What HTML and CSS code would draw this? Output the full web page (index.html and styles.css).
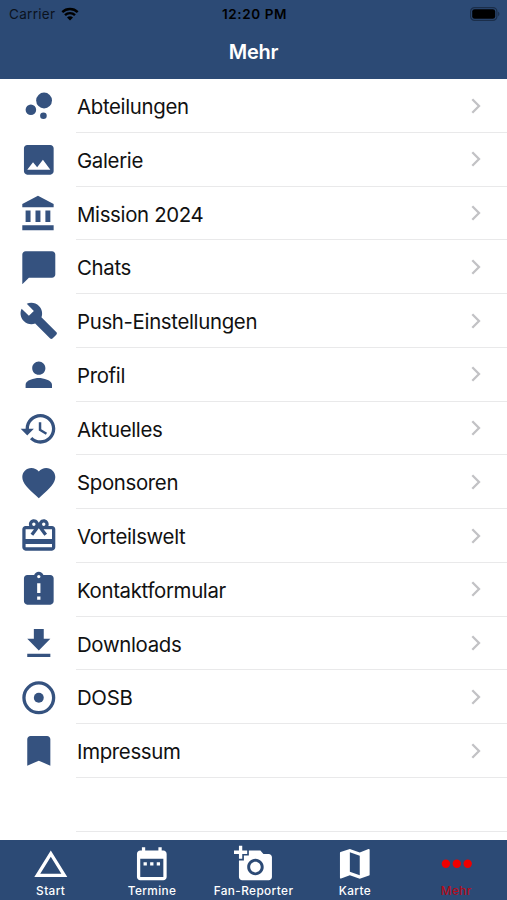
FILE: index.html
```html
<!DOCTYPE html>
<html lang="de">
<head>
  <meta charset="UTF-8" />
  <meta name="viewport" content="width=device-width, initial-scale=1.0" />
  <title>Mehr</title>
  <link rel="stylesheet" href="styles.css">
</head>
<body>
  <svg class="sprite" width="0" height="0">
    <symbol id="chevron" viewBox="0 0 12 18"><path d="M2.300 2.200l6.700 6.800-6.700 6.800" fill="none" stroke="#c2c2c5" stroke-width="2.300"/></symbol>
  </svg>

  <header class="header">
    <div class="status">
      <div class="carrier">
        <span>Carrier</span>
        <svg class="wifi" viewBox="0 0 18 14">
          <path d="M1.300 5.100a11 11 0 0 1 15.400 0M4 8.200a7.100 7.100 0 0 1 10 0" fill="none" stroke="#000" stroke-width="2.400"/>
          <path d="M9 13.600l-3-3.100a4.200 4.200 0 0 1 6 0z"/>
        </svg>
      </div>
      <span class="time">12:20 PM</span>
      <svg class="battery" viewBox="0 0 30 14">
        <rect x=".6" y=".6" width="26.300" height="12.800" rx="4" fill="none" stroke="#1b2e4a" stroke-width="1.200"/>
        <rect x="2.200" y="2.200" width="23" height="9.600" rx="2.400"/>
        <path d="M28.100 4.800c1.700.6 1.700 3.800 0 4.400z" fill="#1b2e4a"/>
      </svg>
    </div>
    <h1>Mehr</h1>
  </header>

  <ul class="menu">
    <li>
      <svg class="icon" viewBox="0 0 24 24"><circle cx="7.2" cy="14.4" r="3.2"/><circle cx="14.8" cy="18" r="2"/><circle cx="15.2" cy="8.8" r="4.8"/></svg>
      <a class="row"><span>Abteilungen</span><svg class="chevron"><use href="#chevron"/></svg></a>
    </li>
    <li>
      <svg class="icon" viewBox="0 0 24 24"><path d="M21 19V5c0-1.100-.9-2-2-2H5c-1.100 0-2 .9-2 2v14c0 1.100.9 2 2 2h14c1.100 0 2-.9 2-2zM8.500 13.500l2.500 3.010L14.500 12l4.500 6H5l3.500-4.500z"/></svg>
      <a class="row"><span>Galerie</span><svg class="chevron"><use href="#chevron"/></svg></a>
    </li>
    <li>
      <svg class="icon" viewBox="0 0 24 24"><path d="M4 10v7h3v-7H4zm6 0v7h3v-7h-3zM2 22h19v-3H2v3zm14-12v7h3v-7h-3zm-4.500-9L2 6v2h19V6l-9.500-5z"/></svg>
      <a class="row"><span>Mission 2024</span><svg class="chevron"><use href="#chevron"/></svg></a>
    </li>
    <li>
      <svg class="icon" viewBox="0 0 24 24"><path d="M20 2H4c-1.100 0-1.990.9-1.990 2L2 22l4-4h14c1.100 0 2-.9 2-2V4c0-1.100-.9-2-2-2z"/></svg>
      <a class="row"><span>Chats</span><svg class="chevron"><use href="#chevron"/></svg></a>
    </li>
    <li>
      <svg class="icon" viewBox="0 0 24 24"><path d="M22.700 19l-9.100-9.100c.9-2.300.4-5-1.500-6.900-2-2-5-2.400-7.400-1.300L9 6 6 9 1.600 4.700C.4 7.100.9 10.100 2.900 12.100c1.900 1.900 4.600 2.400 6.900 1.500l9.100 9.100c.4.4 1 .4 1.400 0l2.300-2.300c.5-.4.5-1.100.1-1.400z"/></svg>
      <a class="row"><span>Push-Einstellungen</span><svg class="chevron"><use href="#chevron"/></svg></a>
    </li>
    <li>
      <svg class="icon" viewBox="0 0 24 24"><path d="M12 12c2.210 0 4-1.790 4-4s-1.790-4-4-4-4 1.790-4 4 1.790 4 4 4zm0 2c-2.670 0-8 1.340-8 4v2h16v-2c0-2.660-5.330-4-8-4z"/></svg>
      <a class="row"><span>Profil</span><svg class="chevron"><use href="#chevron"/></svg></a>
    </li>
    <li>
      <svg class="icon" viewBox="0 0 24 24"><path d="M13 3c-4.970 0-9 4.030-9 9H1l3.890 3.890.07.14L9 12H6c0-3.870 3.130-7 7-7s7 3.130 7 7-3.130 7-7 7c-1.930 0-3.680-.79-4.940-2.060l-1.420 1.420C8.270 19.990 10.510 21 13 21c4.970 0 9-4.030 9-9s-4.030-9-9-9zm-1 5v5l4.280 2.540.72-1.210-3.500-2.080V8H12z"/></svg>
      <a class="row"><span>Aktuelles</span><svg class="chevron"><use href="#chevron"/></svg></a>
    </li>
    <li>
      <svg class="icon" viewBox="0 0 24 24"><path d="M12 21.350l-1.450-1.320C5.400 15.360 2 12.280 2 8.500 2 5.420 4.420 3 7.500 3c1.740 0 3.410.81 4.500 2.090C13.090 3.810 14.760 3 16.500 3 19.580 3 22 5.420 22 8.500c0 3.780-3.400 6.860-8.550 11.540L12 21.350z"/></svg>
      <a class="row"><span>Sponsoren</span><svg class="chevron"><use href="#chevron"/></svg></a>
    </li>
    <li>
      <svg class="icon" viewBox="0 0 24 24"><path d="M20 6h-2.180c.11-.31.18-.65.18-1 0-1.660-1.340-3-3-3-1.050 0-1.960.54-2.500 1.350l-.5.67-.5-.68C10.960 2.540 10.050 2 9 2 7.340 2 6 3.340 6 5c0 .35.07.69.18 1H4c-1.110 0-1.990.89-1.990 2L2 19c0 1.110.89 2 2 2h16c1.110 0 2-.89 2-2V8c0-1.110-.89-2-2-2zm-5-2c.55 0 1 .45 1 1s-.45 1-1 1-1-.45-1-1 .45-1 1-1zM9 4c.55 0 1 .45 1 1s-.45 1-1 1-1-.45-1-1 .45-1 1-1zm11 15H4v-2h16v2zm0-5H4V8h5.080L7 10.830 8.620 12 11 8.760l1-1.360 1 1.360L15.380 12 17 10.830 14.920 8H20v6z"/></svg>
      <a class="row"><span>Vorteilswelt</span><svg class="chevron"><use href="#chevron"/></svg></a>
    </li>
    <li>
      <svg class="icon" viewBox="0 0 24 24"><path d="M19 3h-4.180C14.400 1.840 13.300 1 12 1c-1.300 0-2.400.84-2.820 2H5c-1.100 0-2 .9-2 2v14c0 1.100.9 2 2 2h14c1.100 0 2-.9 2-2V5c0-1.100-.9-2-2-2zm-6 15h-2v-2h2v2zm0-4h-2V8h2v6zm-1-9c-.55 0-1-.45-1-1s.45-1 1-1 1 .45 1 1-.45 1-1 1z"/></svg>
      <a class="row"><span>Kontaktformular</span><svg class="chevron"><use href="#chevron"/></svg></a>
    </li>
    <li>
      <svg class="icon" viewBox="0 0 24 24"><path d="M19 9h-4V3H9v6H5l7 7 7-7zM5 18v2h14v-2H5z"/></svg>
      <a class="row"><span>Downloads</span><svg class="chevron"><use href="#chevron"/></svg></a>
    </li>
    <li>
      <svg class="icon" viewBox="0 0 24 24"><circle cx="12" cy="12" r="9" fill="none" stroke="currentColor" stroke-width="2"/><circle cx="12" cy="12" r="3"/></svg>
      <a class="row"><span>DOSB</span><svg class="chevron"><use href="#chevron"/></svg></a>
    </li>
    <li>
      <svg class="icon" viewBox="0 0 24 24"><path d="M17 3H7c-1.100 0-1.990.9-1.990 2L5 21l7-3 7 3V5c0-1.100-.9-2-2-2z"/></svg>
      <a class="row"><span>Impressum</span><svg class="chevron"><use href="#chevron"/></svg></a>
    </li>
    <li class="empty"><div class="row"></div></li>
  </ul>

  <nav class="tabs">
    <a class="tab">
      <svg class="icon" viewBox="0 0 24 24"><path d="M12 7.770L18.390 18H5.610L12 7.770M12 4L2 20h20L12 4z"/></svg>
      <span>Start</span>
    </a>
    <a class="tab">
      <svg class="icon" viewBox="0 0 24 24"><path d="M9 11H7v2h2v-2zm4 0h-2v2h2v-2zm4 0h-2v2h2v-2zm2-7h-1V2h-2v2H8V2H6v2H5c-1.110 0-1.990.9-1.990 2L3 20c0 1.100.89 2 2 2h14c1.100 0 2-.9 2-2V6c0-1.100-.9-2-2-2zm0 16H5V9h14v11z"/></svg>
      <span>Termine</span>
    </a>
    <a class="tab">
      <svg class="icon" viewBox="0 0 24 24"><path d="M3 4V1h2v3h3v2H5v3H3V6H0V4h3zm3 6V7h3V4h7l1.830 2H21c1.100 0 2 .9 2 2v12c0 1.100-.9 2-2 2H5c-1.100 0-2-.9-2-2V10h3zm7 9c2.760 0 5-2.240 5-5s-2.240-5-5-5-5 2.240-5 5 2.240 5 5 5zm-3.200-5c0 1.770 1.430 3.200 3.200 3.200s3.200-1.430 3.200-3.200-1.430-3.200-3.200-3.200-3.200 1.430-3.200 3.200z"/></svg>
      <span>Fan-Reporter</span>
    </a>
    <a class="tab">
      <svg class="icon" viewBox="0 0 24 24"><path d="M20.500 3l-.16.03L15 5.100 9 3 3.360 4.900c-.21.07-.36.25-.36.48V20.500c0 .28.22.5.5.5l.16-.03L9 18.900l6 2.100 5.640-1.900c.21-.07.36-.25.36-.48V3.500c0-.28-.22-.5-.5-.5zM15 19l-6-2.110V5l6 2.110V19z"/></svg>
      <span>Karte</span>
    </a>
    <a class="tab active">
      <svg class="icon" viewBox="0 0 24 24"><circle cx="5.400" cy="12" r="2.550"/><circle cx="12" cy="12" r="2.550"/><circle cx="18.600" cy="12" r="2.550"/></svg>
      <span>Mehr</span>
    </a>
  </nav>
</body>
</html>
```

FILE: styles.css
```css
:root {
  --primary: #2c4a75;
  --icon: #35527f;
  --line: #e9e9ea;
  --active: #f00000;
}

* {
  box-sizing: border-box;
}

body {
  margin: 0;
  height: 900px;
  display: flex;
  flex-direction: column;
  overflow: hidden;
  background: #fff;
  color: #111;
  font-family: Inter, "Liberation Sans", sans-serif;
}

.sprite {
  display: none;
}

.header {
  flex: none;
  height: 79.2px;
  background: var(--primary);
}

.status {
  height: 27px;
  padding: 0 7px 0 9px;
  display: grid;
  grid-template-columns: 1fr auto 1fr;
  align-items: center;
  color: #000;
  font-size: 13.5px;
}

.carrier {
  display: flex;
  align-items: center;
  gap: 6px;
  color: #0b121d;
  letter-spacing: 0.3px;
}

.wifi {
  width: 18px;
  height: 14px;
}

.time {
  font-weight: 600;
  letter-spacing: 0.6px;
}

.battery {
  width: 30px;
  height: 14px;
  justify-self: end;
}

h1 {
  margin: 0;
  height: 51px;
  line-height: 51px;
  text-align: center;
  color: #fff;
  font-size: 20px;
  font-weight: 600;
  letter-spacing: -0.2px;
}

.menu {
  flex: 1;
  min-height: 0;
  margin: 0;
  padding: 0;
  overflow: hidden;
  list-style: none;
}

.menu li {
  height: 53.75px;
  padding-left: 19px;
  display: flex;
  align-items: center;
}

.menu .empty {
  padding-left: 76px;
}

.icon {
  flex: none;
  width: 39.6px;
  height: 39.6px;
  color: var(--icon);
  fill: currentColor;
}

.menu .icon {
  margin-right: 17.4px;
}

.row {
  flex: 1;
  height: 100%;
  padding: 0 25px 0 1px;
  display: flex;
  align-items: center;
  justify-content: space-between;
  border-bottom: 1px solid var(--line);
  font-size: 20.4px;
  letter-spacing: -0.33px;
}

.row span {
  padding-top: 2px;
}

.chevron {
  width: 12px;
  height: 18px;
}

.tabs {
  flex: none;
  height: 60.4px;
  display: grid;
  grid-template-columns: repeat(5, 1fr);
  background: var(--primary);
  color: #fff;
}

.tab {
  padding-top: 4px;
  display: flex;
  flex-direction: column;
  align-items: center;
  font-size: 11.8px;
  font-weight: 500;
  line-height: 16px;
  letter-spacing: 0.4px;
}

.tab .icon {
  color: inherit;
}

.active {
  color: var(--active);
}

.active span {
  color: #b30d1c;
}
```
